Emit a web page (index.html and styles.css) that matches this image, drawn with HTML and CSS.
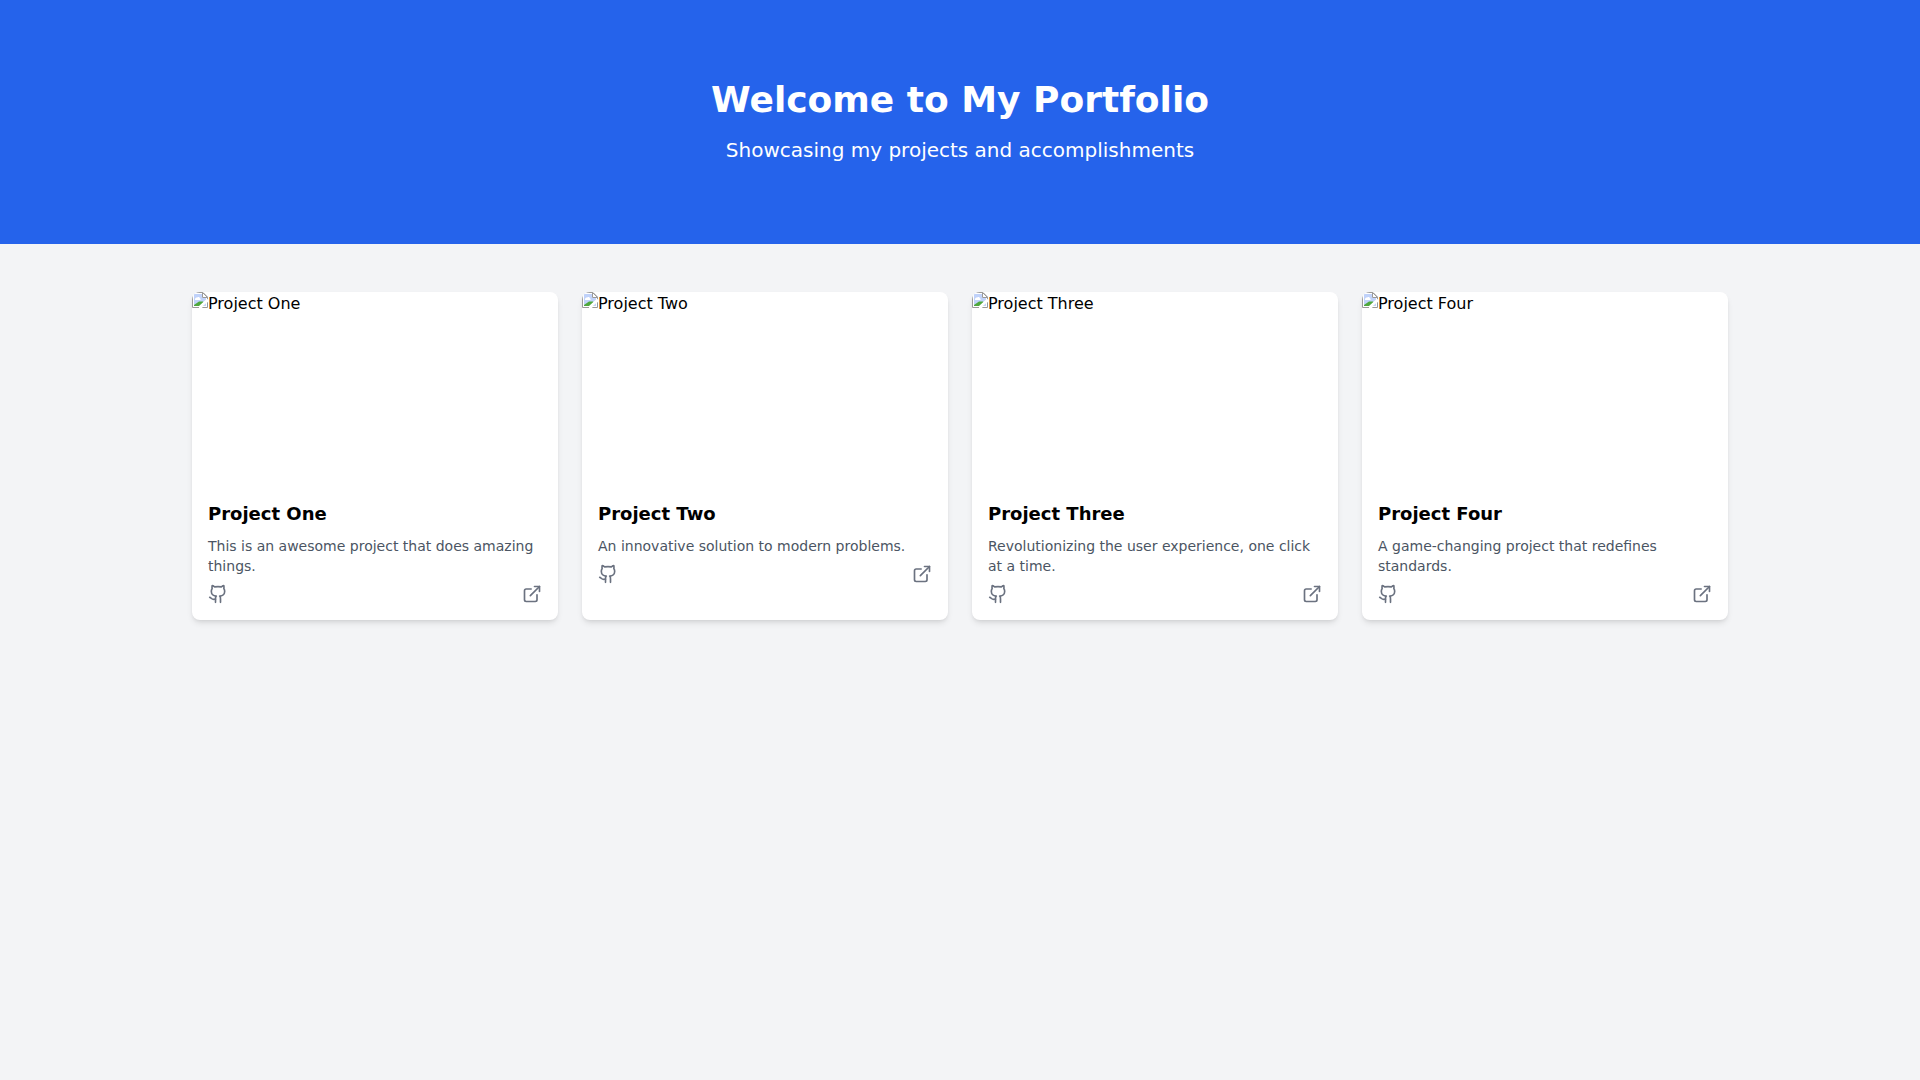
FILE: index.html
```html
<!DOCTYPE html>
<html lang="en">
<head>
    <meta charset="UTF-8">
    <meta name="viewport" content="width=device-width, initial-scale=1.0">
    <title>My Portfolio</title>
    <link rel="stylesheet" href="styles.css">
</head>
<body>
    <!-- shared icons -->
    <svg class="icon-defs" aria-hidden="true">
        <symbol id="icon-github" viewBox="0 0 24 24">
            <path d="M15 22v-4a4.8 4.8 0 0 0-1-3.5c3 0 6-2 6-5.5.08-1.25-.27-2.48-1-3.5.28-1.15.28-2.35 0-3.5 0 0-1 0-3 1.5-2.64-.5-5.36-.5-8 0C6 2 5 2 5 2c-.3 1.15-.3 2.35 0 3.5A5.403 5.403 0 0 0 4 9c0 3.5 3 5.5 6 5.5-.39.49-.68 1.05-.85 1.65-.17.6-.22 1.23-.15 1.85v4"/>
            <path d="M9 18c-4.51 2-5-2-7-2"/>
        </symbol>
        <symbol id="icon-external" viewBox="0 0 24 24">
            <path d="M15 3h6v6"/>
            <path d="M10 14 21 3"/>
            <path d="M18 13v6a2 2 0 0 1-2 2H5a2 2 0 0 1-2-2V8a2 2 0 0 1 2-2h6"/>
        </symbol>
        <symbol id="icon-picture" viewBox="0 0 16 16">
            <path d="M0.5 0.5H11L15.5 5V15.5H0.5Z" fill="#fff" stroke="#9a9a9a"/>
            <path d="M2 2H10V6H14V14H2Z" fill="#c0d2fa"/>
            <path d="M3 7.500C3 6 4 5.500 5 5.500C6 4.500 8 5 8 6.500C9 6.500 9 8 8 8H3Z" fill="#fff"/>
            <path d="M2 14V13L7 9.500H11L12 11V14Z" fill="#4fa83d"/>
            <path d="M10.5 0.5V5.5H15.5Z" fill="#fff" stroke="#9a9a9a"/>
            <path d="M16 7L13.500 8L7 14V16H10L13 12L16 10Z" fill="#fff"/>
        </symbol>
    </svg>

    <header class="hero">
        <h1>Welcome to My Portfolio</h1>
        <p>Showcasing my projects and accomplishments</p>
    </header>

    <main class="projects">
        <!-- Project One -->
        <article class="card">
            <div class="card-image">
                <svg class="picture" aria-hidden="true"><use href="#icon-picture"/></svg>
                <span>Project One</span>
            </div>
            <div class="card-body">
                <h2>Project One</h2>
                <p>This is an awesome project that does amazing things.</p>
                <div class="card-links">
                    <a href="#" aria-label="Project One on GitHub"><svg class="icon"><use href="#icon-github"/></svg></a>
                    <a href="#" aria-label="Open Project One"><svg class="icon"><use href="#icon-external"/></svg></a>
                </div>
            </div>
        </article>

        <!-- Project Two -->
        <article class="card">
            <div class="card-image">
                <svg class="picture" aria-hidden="true"><use href="#icon-picture"/></svg>
                <span>Project Two</span>
            </div>
            <div class="card-body">
                <h2>Project Two</h2>
                <p>An innovative solution to modern problems.</p>
                <div class="card-links">
                    <a href="#" aria-label="Project Two on GitHub"><svg class="icon"><use href="#icon-github"/></svg></a>
                    <a href="#" aria-label="Open Project Two"><svg class="icon"><use href="#icon-external"/></svg></a>
                </div>
            </div>
        </article>

        <!-- Project Three -->
        <article class="card">
            <div class="card-image">
                <svg class="picture" aria-hidden="true"><use href="#icon-picture"/></svg>
                <span>Project Three</span>
            </div>
            <div class="card-body">
                <h2>Project Three</h2>
                <p>Revolutionizing the user experience, one click at a time.</p>
                <div class="card-links">
                    <a href="#" aria-label="Project Three on GitHub"><svg class="icon"><use href="#icon-github"/></svg></a>
                    <a href="#" aria-label="Open Project Three"><svg class="icon"><use href="#icon-external"/></svg></a>
                </div>
            </div>
        </article>

        <!-- Project Four -->
        <article class="card">
            <div class="card-image">
                <svg class="picture" aria-hidden="true"><use href="#icon-picture"/></svg>
                <span>Project Four</span>
            </div>
            <div class="card-body">
                <h2>Project Four</h2>
                <p>A game-changing project that redefines standards.</p>
                <div class="card-links">
                    <a href="#" aria-label="Project Four on GitHub"><svg class="icon"><use href="#icon-github"/></svg></a>
                    <a href="#" aria-label="Open Project Four"><svg class="icon"><use href="#icon-external"/></svg></a>
                </div>
            </div>
        </article>
    </main>
</body>
</html>
```
FILE: styles.css
```css
* {
    box-sizing: border-box;
    margin: 0;
    padding: 0;
}

body {
    min-height: 100vh;
    font-family: "DejaVu Sans", sans-serif;
    font-size: 16px;
    line-height: 24px;
    color: #000;
    background-color: #f3f4f6;
}

.icon-defs {
    display: none;
}

/* top banner */
.hero {
    padding: 80px 16px;
    text-align: center;
    color: #fff;
    background-color: #2563eb;
}

.hero h1 {
    margin-bottom: 16px;
    font-size: 36px;
    line-height: 40px;
}

.hero p {
    font-size: 20px;
    line-height: 28px;
}

/* project grid */
.projects {
    display: grid;
    grid-template-columns: repeat(4, 1fr);
    gap: 24px;
    max-width: 1536px;
    margin: 0 auto;
    padding: 48px 0;
}

.card {
    overflow: hidden;
    background-color: #fff;
    border-radius: 8px;
    box-shadow: 0 4px 6px -1px rgba(0, 0, 0, 0.1), 0 2px 4px -2px rgba(0, 0, 0, 0.1);
}

.card-image {
    display: flex;
    align-items: flex-start;
    height: 192px;
}

.picture {
    width: 16px;
    height: 16px;
}

.card-body {
    padding: 16px;
}

.card-body h2 {
    margin-bottom: 8px;
    font-size: 18px;
    line-height: 28px;
}

.card-body p {
    margin-bottom: 8px;
    font-size: 14px;
    line-height: 20px;
    color: #4b5563;
}

.card-links {
    display: flex;
    justify-content: space-between;
}

.card-links a {
    color: #6b7280;
}

.card-links a:hover {
    color: #2563eb;
}

.icon {
    display: block;
    width: 20px;
    height: 20px;
    fill: none;
    stroke: currentColor;
    stroke-width: 2;
    stroke-linecap: round;
    stroke-linejoin: round;
}

@media (max-width: 1024px) {
    .projects {
        grid-template-columns: repeat(2, 1fr);
        padding: 48px 16px;
    }
}

@media (max-width: 640px) {
    .projects {
        grid-template-columns: 1fr;
    }
}
```
